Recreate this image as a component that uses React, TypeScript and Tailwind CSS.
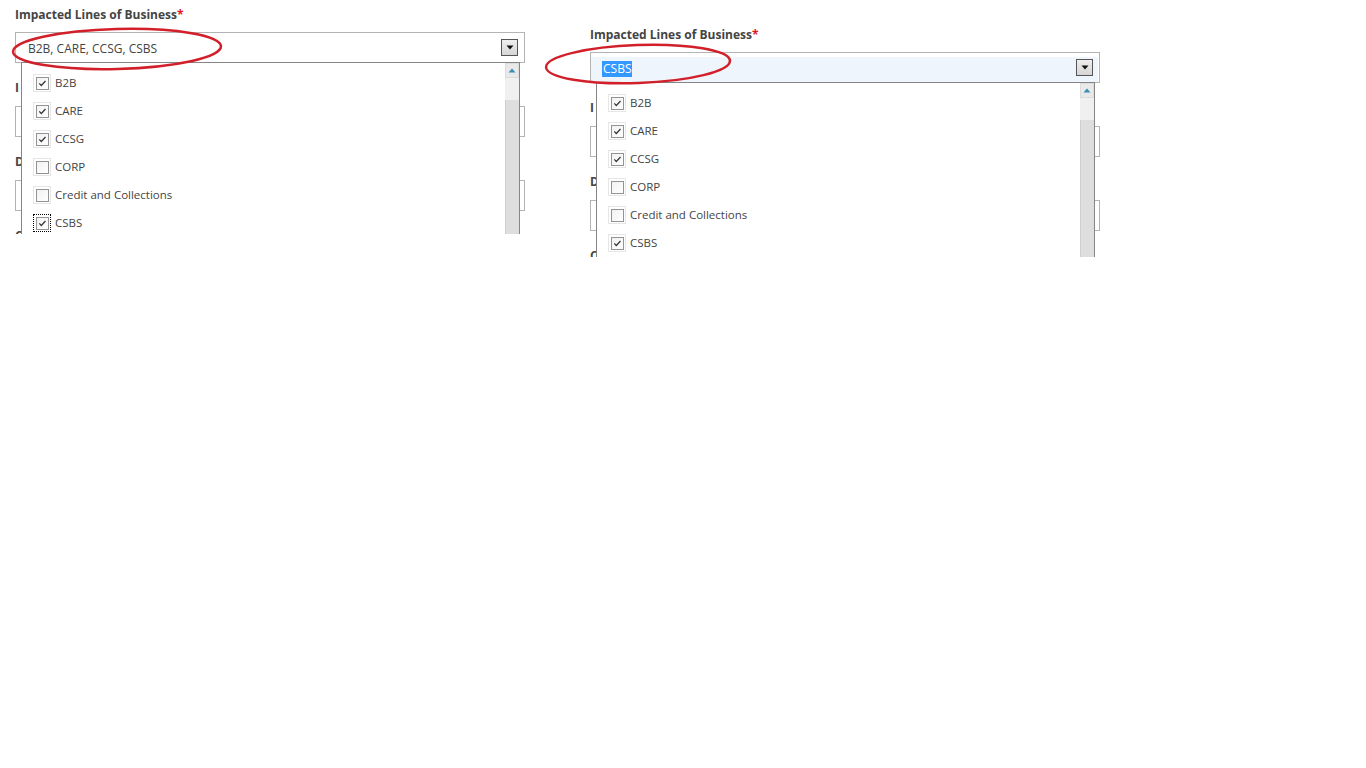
import React from 'react';

const options = [
  { label: 'B2B', checked: true },
  { label: 'CARE', checked: true },
  { label: 'CCSG', checked: true },
  { label: 'CORP', checked: false },
  { label: 'Credit and Collections', checked: false },
  { label: 'CSBS', checked: true },
];

// fields under the open list: only their first letter peeks out
const hiddenFields = ['I', 'D', 'C'];

function Check({ checked, focused }: { checked: boolean; focused?: boolean }) {
  return (
    <span
      className={`flex h-[18px] w-[18px] shrink-0 items-center justify-center border ${
        focused ? 'border-dotted border-black' : 'border-[#e6e6e6]'
      }`}
    >
      <span className="flex h-[13px] w-[13px] items-center justify-center border border-[#939393] bg-gradient-to-br from-[#f2f2f2] to-white">
        {checked && (
          <svg width="11" height="11" viewBox="0 0 11 11">
            <path d="M2.3 5.3 L4.3 7.5 L8.5 3" fill="none" stroke="#333" strokeWidth="1.2" />
          </svg>
        )}
      </span>
    </span>
  );
}

function DropButton() {
  return (
    <span className="absolute right-[6px] top-[6px] flex h-[17px] w-[17px] items-center justify-center border border-[#555] bg-gradient-to-b from-[#eeeeee] to-[#d6d6d6]">
      <svg width="8" height="5" viewBox="0 0 8 5">
        <path d="M0.5 0.5 H7.5 L4 4.5 Z" fill="#111" />
      </svg>
    </span>
  );
}

function Scrollbar() {
  return (
    <div className="flex w-[14px] shrink-0 flex-col">
      <div className="flex h-[15px] items-center justify-center border border-[#dcdcdc] bg-[#e9e9e9]">
        <svg width="8" height="5" viewBox="0 0 8 5">
          <path d="M0.5 4.5 H7.5 L4 0.5 Z" fill="#3a8db5" />
        </svg>
      </div>
      <div className="h-[22px] bg-[#f0f0f0]" />
      <div className="flex-1 border-l border-[#cfcfcf] bg-[#dedede]" />
    </div>
  );
}

function Panel({ height, focused, lastFocused }: { height: number; focused?: boolean; lastFocused?: boolean }) {
  return (
    <div className="relative w-[575px] shrink-0 overflow-hidden pl-[15px]" style={{ height }}>
      <div className="w-[510px]">
        <label className="block pt-[7px] text-[12px] font-bold leading-[16px] text-[#444]">
          Impacted Lines of Business<span className="text-[#e0161d]">*</span>
        </label>
        <div className="relative z-10 mt-[9px] h-[31px] border border-[#b4b4b4] bg-white">
          {focused && <div className="absolute bottom-0 left-0 right-[1px] top-[4px] bg-[#eef5fd]" />}
          <div className="relative flex h-full items-center pl-[11px] pt-[3px] text-[12px] leading-[16px] text-[#444]">
            {focused ? (
              <span className="bg-[#3399ff] px-[1px] text-white">CSBS</span>
            ) : (
              <span className="pl-[1px]">B2B, CARE, CCSG, CSBS</span>
            )}
          </div>
          <DropButton />
          <div className="absolute left-[5px] top-full flex h-[240px] w-[499px] border border-[#858585] bg-white">
            <ul className="flex-1 pt-[6px]">
              {options.map((o, i) => (
                <li key={o.label} className="flex h-[28px] items-center pl-[11px]">
                  <Check checked={o.checked} focused={lastFocused && i === options.length - 1} />
                  <span className="ml-[4px] text-[11.5px] leading-[16px] text-[#444]">{o.label}</span>
                </li>
              ))}
            </ul>
            <Scrollbar />
          </div>
        </div>
        {hiddenFields.map((f) => (
          <div key={f} className="mt-[11px]">
            <label className="block pt-[6px] text-[12px] font-bold leading-[16px] text-[#444]">{f}</label>
            <div className="mt-[10px] h-[31px] border border-[#b4b4b4] bg-white" />
          </div>
        ))}
      </div>
    </div>
  );
}

export default function App() {
  return (
    <div className="relative min-h-screen bg-white font-['Open_Sans',sans-serif]">
      <div className="flex items-start">
        <Panel height={234} lastFocused />
        <div className="mt-[20px]">
          <Panel height={237} focused />
        </div>
      </div>
      <svg className="pointer-events-none absolute left-0 top-0 z-20" width="1366" height="300">
        <ellipse cx="117" cy="49" rx="104" ry="20" fill="none" stroke="#d2202b" strokeWidth="2.5" transform="rotate(-1.5 117 49)" />
        <ellipse cx="638" cy="64" rx="92" ry="19" fill="none" stroke="#d2202b" strokeWidth="2.5" transform="rotate(-2 638 64)" />
      </svg>
    </div>
  );
}
